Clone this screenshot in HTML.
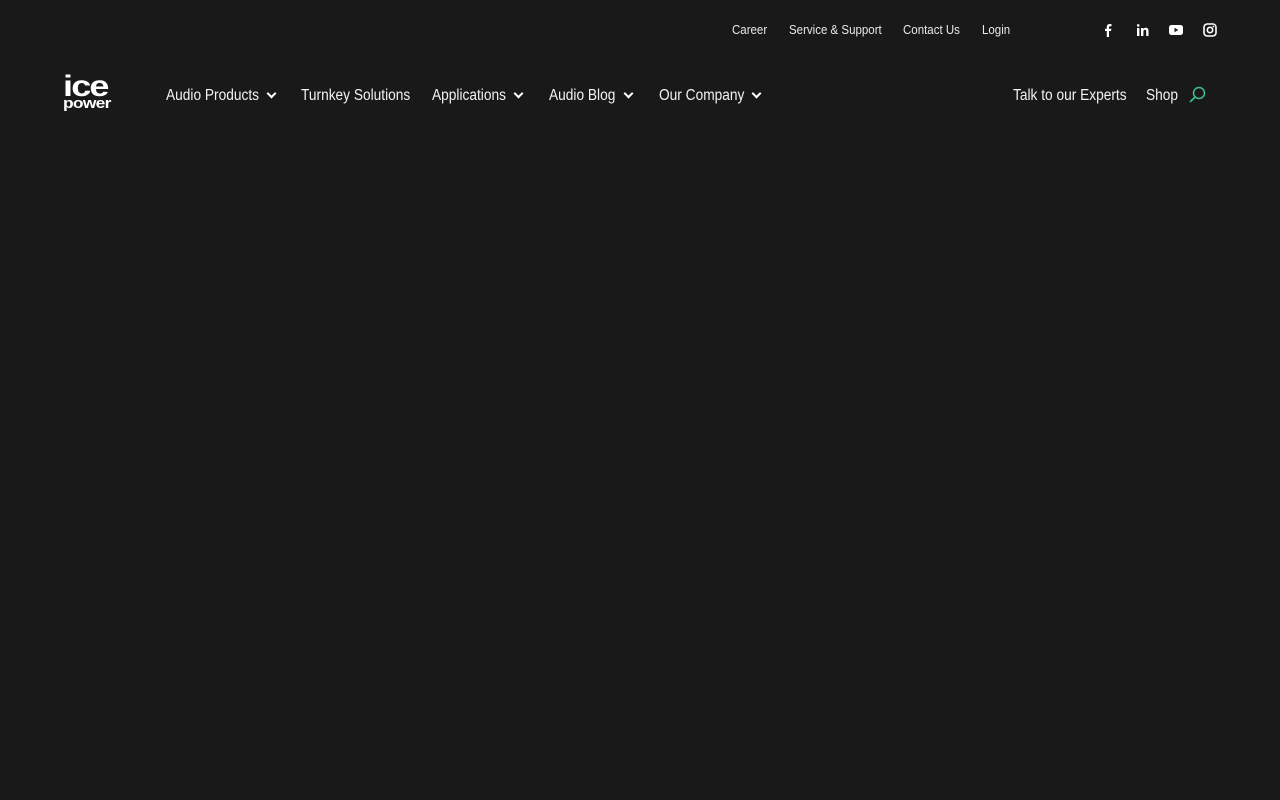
<!DOCTYPE html>
<html><head><meta charset="utf-8"><style>
html,body{margin:0;padding:0;background:#191919;width:1280px;height:800px;overflow:hidden}
body{font-family:"Liberation Sans",sans-serif;color:#f2f2f2;position:relative}
.t{position:absolute;white-space:nowrap;transform:scaleX(0.885);transform-origin:0 0}
.s{font-size:13px;top:22px;color:#e8e8e8}
.m{font-size:15.5px;top:87px}
.chev{position:absolute;width:5px;height:5px;border-right:2px solid #fff;border-bottom:2px solid #fff;transform:rotate(45deg);top:90px}
svg{position:absolute}
</style></head><body>
<div class="t s" style="left:732px">Career</div>
<div class="t s" style="left:789px">Service &amp; Support</div>
<div class="t s" style="left:903px">Contact Us</div>
<div class="t s" style="left:982px">Login</div>

<svg style="left:1103px;top:23px" width="10" height="14" viewBox="0 0 10 14"><path d="M6 14V8h2l.4-2.3H6V4.3c0-.7.3-1.1 1.1-1.1h1.4V1.1C8.2 1 7.5 1 6.8 1 5 1 3.8 2 3.8 4v1.7H2V8h1.8v6z" fill="#fff"/></svg>
<svg style="left:1137px;top:24px" width="12" height="12" viewBox="0 0 12 12"><rect x="0" y="4" width="2.4" height="8" fill="#fff"/><circle cx="1.2" cy="1.4" r="1.3" fill="#fff"/><path d="M4 4h2.3v1.1C6.8 4.3 7.6 3.8 8.8 3.8 10.8 3.8 11.5 5 11.5 7v5H9.2V7.5c0-1-.3-1.7-1.2-1.7-1 0-1.6.7-1.6 1.8V12H4z" fill="#fff"/></svg>
<svg style="left:1169px;top:25px" width="14" height="10" viewBox="0 0 14 10"><rect x="0" y="0" width="14" height="10" rx="2.5" fill="#fff"/><path d="M5.5 2.8v4.4L9.3 5z" fill="#191919"/></svg>
<svg style="left:1203px;top:23px" width="14" height="14" viewBox="0 0 14 14"><rect x="1" y="1" width="12" height="12" rx="3.3" fill="none" stroke="#fff" stroke-width="1.6"/><circle cx="7" cy="7" r="2.7" fill="none" stroke="#fff" stroke-width="1.6"/><circle cx="10.4" cy="3.6" r=".8" fill="#fff"/></svg>

<div style="position:absolute;left:63px;top:72px;font-family:'Liberation Sans',sans-serif;font-weight:bold;color:#fff;line-height:1;transform:scaleX(1.2);transform-origin:0 0">
<div style="font-size:30px;letter-spacing:-1.5px">ice</div>
<div style="font-size:14.5px;letter-spacing:-0.6px;margin-top:-5px">power</div>
</div>

<div class="t m" style="left:166px">Audio Products</div><span class="chev" style="left:268px"></span>
<div class="t m" style="left:301px">Turnkey Solutions</div>
<div class="t m" style="left:432px">Applications</div><span class="chev" style="left:515px"></span>
<div class="t m" style="left:549px">Audio Blog</div><span class="chev" style="left:625px"></span>
<div class="t m" style="left:659px">Our Company</div><span class="chev" style="left:753px"></span>
<div class="t m" style="left:1013px">Talk to our Experts</div>
<div class="t m" style="left:1146px">Shop</div>
<svg style="left:1189px;top:86px" width="18" height="17" viewBox="0 0 18 17"><circle cx="10" cy="7" r="5.5" fill="none" stroke="#3fbf98" stroke-width="1.5"/><path d="M6.2 11 1.5 15.5" stroke="#3fbf98" stroke-width="1.6" stroke-linecap="round"/></svg>
</body></html>
